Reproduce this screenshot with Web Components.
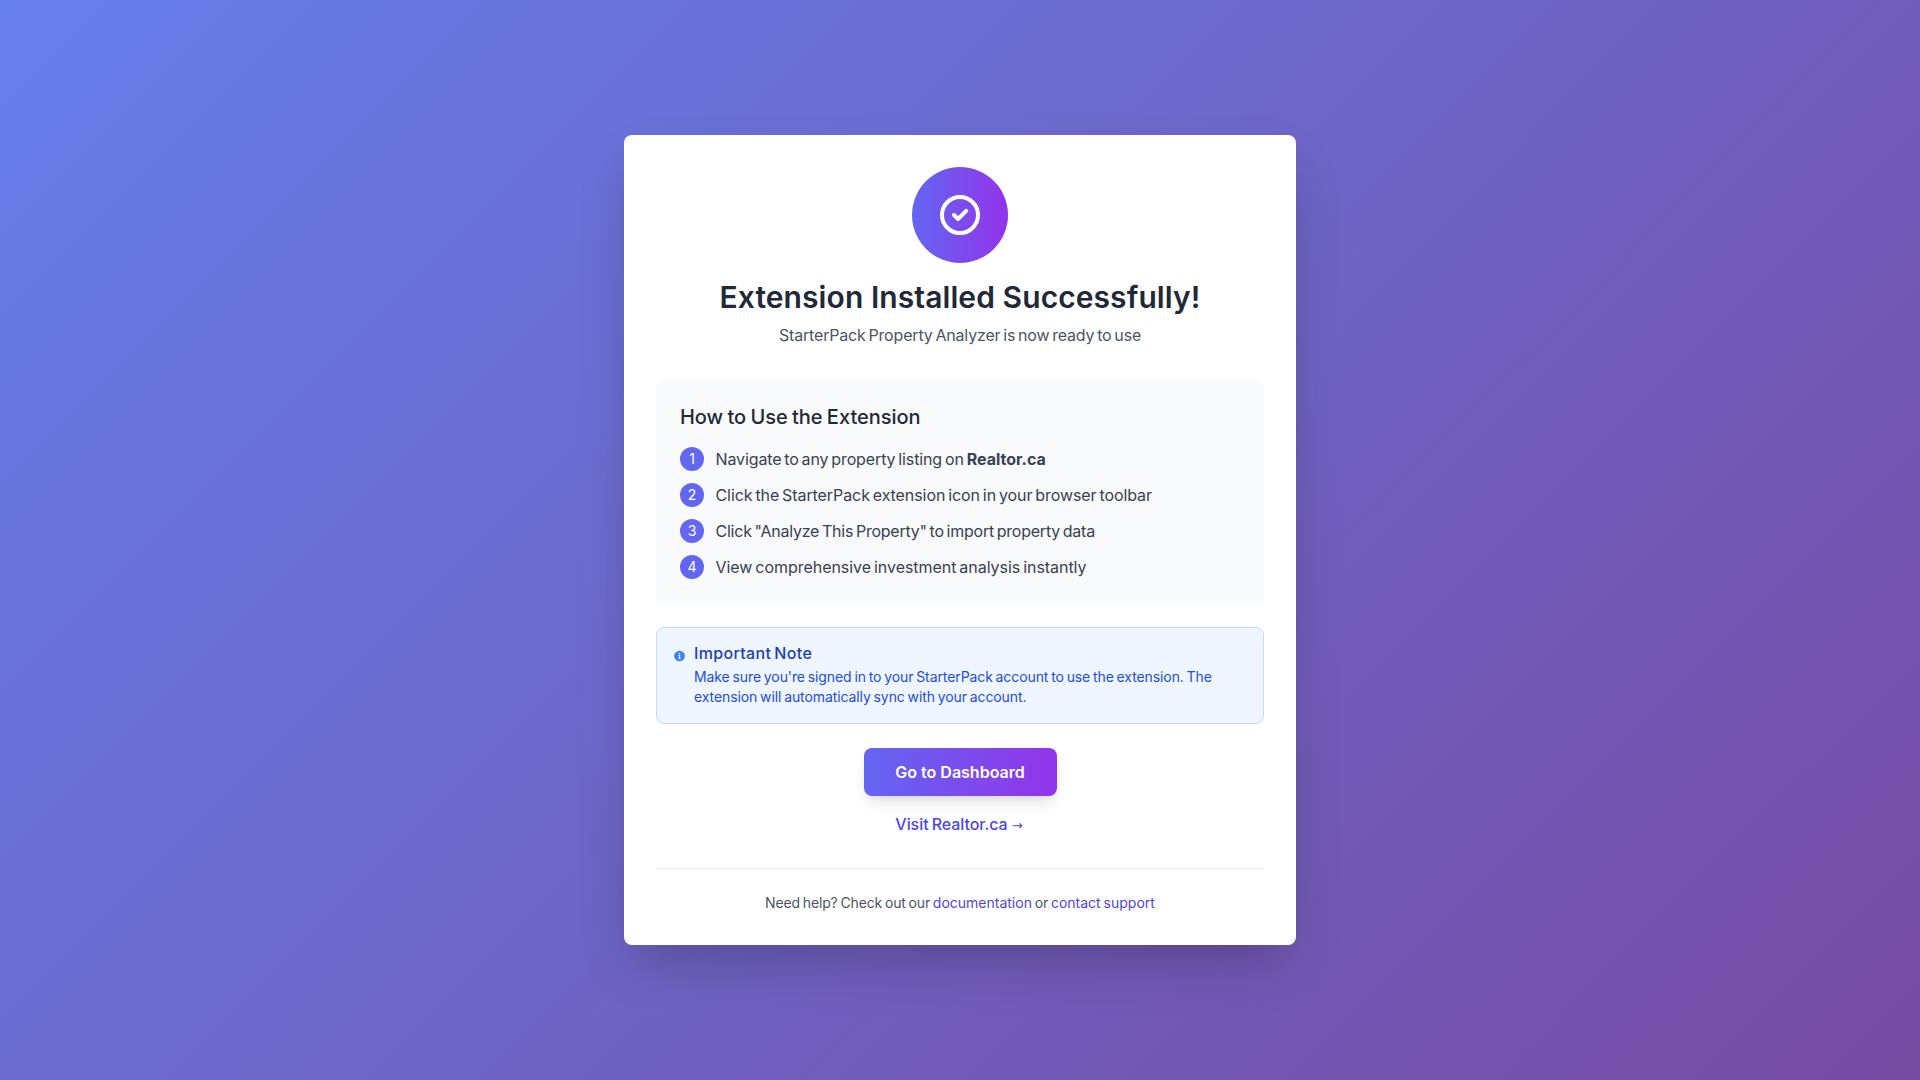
<!DOCTYPE html>
<html lang="en">
<head>
<meta charset="utf-8">
<title>Extension Installed</title>
<style>
html,body{margin:0;height:100%}
body{font-family:Inter,"Liberation Sans",sans-serif;font-size:16px;line-height:24px;font-weight:400;color:#1f2937}
</style>
</head>
<body>
<welcome-page>
  <success-header slot="header">
    <span slot="title">Extension Installed Successfully!</span>
    <span slot="subtitle">StarterPack Property Analyzer is now ready to use</span>
  </success-header>
  <how-to-steps heading="How to Use the Extension">
    <how-to-step number="1" style="letter-spacing:-.12px">Navigate to any property listing on <strong style="font-weight:700;letter-spacing:0">Realtor.ca</strong></how-to-step>
    <how-to-step number="2" style="letter-spacing:-.08px">Click the StarterPack extension icon in your browser toolbar</how-to-step>
    <how-to-step number="3" style="letter-spacing:-.23px">Click "Analyze This Property" to import property data</how-to-step>
    <how-to-step number="4" style="letter-spacing:-.04px">View comprehensive investment analysis instantly</how-to-step>
  </how-to-steps>
  <info-note heading="Important Note">Make sure you're signed in to your StarterPack account to use the extension. The extension will automatically sync with your account.</info-note>
  <page-actions></page-actions>
  <help-footer></help-footer>
</welcome-page>
<script>
const define = (name, html, init) => customElements.define(name, class extends HTMLElement {
  connectedCallback() {
    if (this.shadowRoot) return;
    const t = document.createElement('template');
    t.innerHTML = html;
    this.attachShadow({ mode: 'open' }).append(t.content.cloneNode(true));
    if (init) init(this, this.shadowRoot);
  }
});
const setText = attr => (host, root) => { root.querySelector('.' + attr).textContent = host.getAttribute(attr); };

define('welcome-page', `
<style>
:host{display:flex;align-items:center;justify-content:center;min-height:100vh;background:linear-gradient(135deg,#667eea 0%,#764ba2 100%)}
main{box-sizing:border-box;width:672px;height:810px;padding:32px;background:#fff;border-radius:8px;box-shadow:0 25px 50px -12px rgba(0,0,0,.25)}
</style>
<main><slot name="header"></slot><slot></slot></main>`);

define('success-header', `
<style>
:host{display:flex;flex-direction:column;align-items:center;margin-bottom:32px}
.badge{display:flex;align-items:center;justify-content:center;width:96px;height:96px;border-radius:50%;background:linear-gradient(90deg,#6366f1,#9333ea);margin-bottom:16px}
svg{display:block}
h1{margin:0 0 8px;font-size:30px;line-height:36px;font-weight:600;letter-spacing:.08px;white-space:nowrap}
p{margin:0;color:#4b5563;letter-spacing:-.175px;word-spacing:-1.5px;white-space:nowrap}
</style>
<div class="badge"><svg width="40" height="40" viewBox="0 0 40 40" fill="none" stroke="#fff" stroke-width="4" stroke-linecap="round" stroke-linejoin="round"><circle cx="20" cy="20" r="18"/><path d="M14 20l4 4 8.2-8.2"/></svg></div>
<h1><slot name="title"></slot></h1>
<p><slot name="subtitle"></slot></p>`);

define('how-to-steps', `
<style>
:host{display:block;background:#f9fafb;border-radius:8px;padding:24px;margin-bottom:24px}
h2{margin:0 0 16px;font-size:20px;line-height:28px;font-weight:500;letter-spacing:-.02px;word-spacing:-1px}
.list{display:flex;flex-direction:column;gap:12px}
</style>
<h2 class="heading"></h2><div class="list"><slot></slot></div>`, setText('heading'));

define('how-to-step', `
<style>
:host{display:flex;gap:11.5px;height:24px;color:#374151;word-spacing:-1.5px;white-space:nowrap}
.number{width:24px;height:24px;border-radius:50%;background:#6366f1;color:#fff;font-size:14px;text-align:center;letter-spacing:0}
</style>
<span class="number"></span><span><slot></slot></span>`, setText('number'));

define('info-note', `
<style>
:host{display:flex;gap:8px;box-sizing:border-box;height:97px;padding:16px;background:#eff6ff;border:1px solid #bfdbfe;border-radius:8px;margin-bottom:24px}
svg{display:block;flex:none;margin-top:5px}
h3{margin:0 0 4px;font-size:16px;line-height:19px;font-weight:500;color:#1e40af;letter-spacing:.33px;word-spacing:-1.5px}
p{margin:0;font-size:14px;line-height:20px;color:#1d4ed8;letter-spacing:-.095px;word-spacing:-1px}
</style>
<svg width="13" height="14" viewBox="0 0 13 14"><circle cx="6.5" cy="7" r="5.35" fill="#3b82f6"/><path d="M5.9 3.9h1.3v1.3H5.9zM5.3 6.1h1.9v2.8h.6v.9H5.3v-.9h.6V7h-.6z" fill="#fff"/></svg>
<div><h3 class="heading"></h3><p><slot></slot></p></div>`, setText('heading'));

define('page-actions', `
<style>
:host{display:flex;flex-direction:column;align-items:center;gap:16px}
button{width:193px;height:48px;padding:0;border:0;border-radius:8px;background:linear-gradient(90deg,#6366f1,#9333ea);box-shadow:0 10px 15px -3px rgba(0,0,0,.1),0 4px 6px -4px rgba(0,0,0,.1);color:#fff;font:600 16px/24px Inter,sans-serif}
a{display:flex;align-items:center;gap:4px;height:24px;color:#4f46e5;font-weight:500;letter-spacing:-.06px;word-spacing:-1px;white-space:nowrap}
.arrow{display:block;width:13px;padding-top:3px;font:400 13px/20px "DejaVu Sans",sans-serif;letter-spacing:0}
</style>
<button>Go to Dashboard</button><a><span>Visit Realtor.ca</span><span class="arrow">→</span></a>`);

define('help-footer', `
<style>
:host{display:block;margin-top:32px;padding-top:24px;border-top:1px solid #e5e7eb;text-align:center;font-size:14px;line-height:20px;color:#4b5563;letter-spacing:-.14px;word-spacing:-1px;white-space:nowrap}
a{color:#4f46e5;letter-spacing:0}
</style>
Need help? Check out our <a>documentation</a> or <a>contact support</a>`);
</script>
</body>
</html>
